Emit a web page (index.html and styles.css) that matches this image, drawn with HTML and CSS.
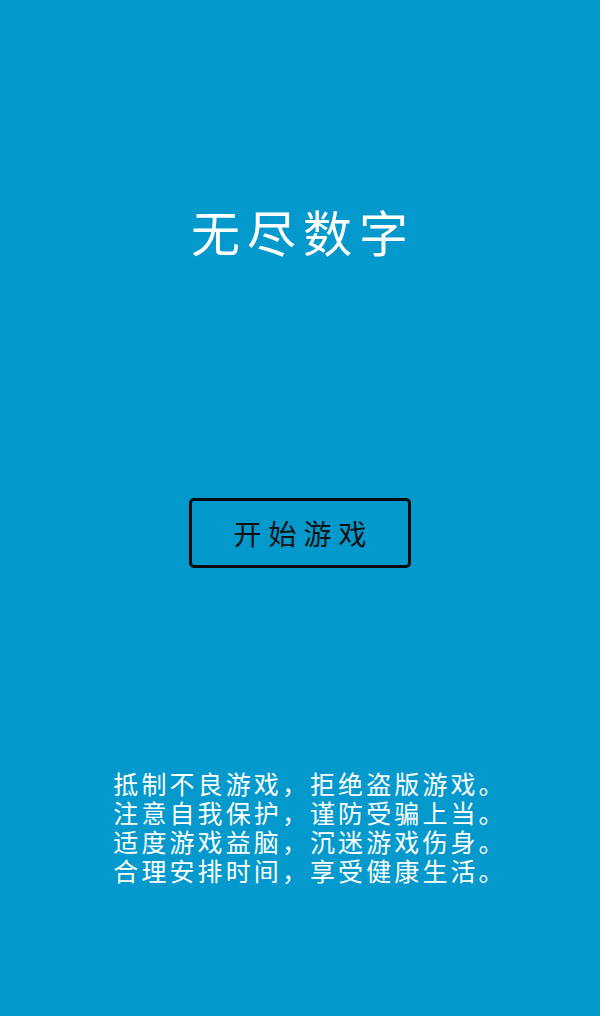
FILE: index.html
```html
<!DOCTYPE html>
<html lang="zh">
<head>
<meta charset="utf-8">
<link rel="stylesheet" href="styles.css">
</head>
<body>
<div class="screen">
  <h1 class="title">无尽数字</h1>
  <button class="start">开始游戏</button>
  <div class="notice">
    <p>抵制不良游戏，拒绝盗版游戏。</p>
    <p>注意自我保护，谨防受骗上当。</p>
    <p>适度游戏益脑，沉迷游戏伤身。</p>
    <p>合理安排时间，享受健康生活。</p>
  </div>
</div>
</body>
</html>
```
FILE: styles.css
```css
html, body {
  margin: 0;
  padding: 0;
  background: #0399cc;
}
.screen {
  width: 600px;
  height: 1016px;
  display: flex;
  flex-direction: column;
  align-items: center;
  font-family: "Noto Sans CJK SC", "Noto Sans", sans-serif;
  color: #fff;
}
.title {
  margin: 207px 0 0;
  padding-left: 6px;
  font-size: 49px;
  font-weight: 400;
  line-height: 48px;
  letter-spacing: 7px;
}
.start {
  margin-top: 243px;
  width: 222px;
  height: 70px;
  box-sizing: border-box;
  border: 3px solid #0a0a0a;
  border-radius: 5px;
  background: transparent;
  font-family: "Noto Sans CJK SC", sans-serif;
  font-size: 28px;
  font-weight: 400;
  letter-spacing: 7px;
  padding: 0 0 0 7px;
  color: #111;
  line-height: 1;
}
.notice {
  margin-top: 201px;
  padding-left: 20px;
  font-size: 25px;
  line-height: 29px;
  letter-spacing: 3.1px;
}
.notice p {
  margin: 0;
}
```
